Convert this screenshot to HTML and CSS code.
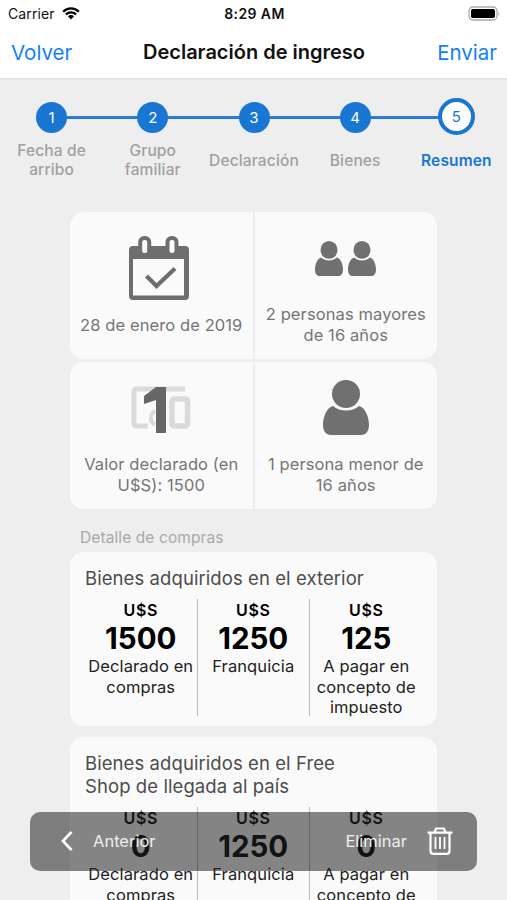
FILE: index.html
```html
<!DOCTYPE html>
<html lang="es">
<head>
    <meta charset="UTF-8">
    <meta name="viewport" content="width=device-width, initial-scale=1.0">
    <title>Declaración de ingreso</title>
    <link rel="stylesheet" href="styles.css">
</head>
<body>
    <header class="header">
        <div class="status">
            <div class="carrier">
                <span>Carrier</span>
                <svg class="wifi" width="18" height="13" viewBox="0 0 18 13">
                    <path d="M1.2 4.7a11 11 0 0 1 15.6 0M3.9 7.5a7.2 7.2 0 0 1 10.2 0" fill="none" stroke="#000" stroke-width="2.3"/>
                    <path d="M9 12.4L5.9 9.3a4.4 4.4 0 0 1 6.2 0z"/>
                </svg>
            </div>
            <span class="time">8:29 AM</span>
            <svg class="battery" width="33" height="15" viewBox="0 0 33 15">
                <rect x="1" y="1" width="28" height="13" rx="4" fill="#fff" stroke="#aaa" stroke-width="1.3"/>
                <rect x="3" y="3" width="24" height="9" rx="1.8"/>
                <path d="M30.5 5.5q1.6 2 0 4z" fill="#888"/>
            </svg>
        </div>
        <nav class="navbar">
            <a class="nav-link">Volver</a>
            <h1 class="title">Declaración de ingreso</h1>
            <a class="nav-link right">Enviar</a>
        </nav>
    </header>

    <ol class="steps">
        <li class="step"><span class="dot">1</span><span class="step-label">Fecha de<br>arribo</span></li>
        <li class="step"><span class="dot">2</span><span class="step-label">Grupo<br>familiar</span></li>
        <li class="step"><span class="dot">3</span><span class="step-label">Declaración</span></li>
        <li class="step"><span class="dot">4</span><span class="step-label">Bienes</span></li>
        <li class="step active"><span class="dot">5</span><span class="step-label">Resumen</span></li>
    </ol>

    <main class="content">
        <div class="summary">
            <div class="row">
                <div class="cell">
                    <svg class="icon-calendar" width="60" height="64" viewBox="0 0 60 64">
                        <path fill="#6e6e6e" fill-rule="evenodd" d="M4 10H56a4 4 0 0 1 4 4V60a4 4 0 0 1-4 4H4a4 4 0 0 1-4-4V14a4 4 0 0 1 4-4zM4 23V59.500H55V23z"/>
                        <rect x="11.200" y="2" width="9" height="17" rx="4" fill="#fafafa" stroke="#6e6e6e" stroke-width="4"/>
                        <rect x="38.500" y="2" width="9" height="17" rx="4" fill="#fafafa" stroke="#6e6e6e" stroke-width="4"/>
                        <path d="M17.500 40l10 10L46 32.500" fill="none" stroke="#6e6e6e" stroke-width="4.200"/>
                    </svg>
                    <p>28 de enero de 2019</p>
                </div>
                <div class="cell">
                    <div class="people">
                        <svg width="28" height="35" viewBox="0 0 46 55" preserveAspectRatio="none">
                            <circle cx="23" cy="14" r="14"/>
                            <path d="M10 26C3 28 0 38 0 45C0 51 3 55 8 55H38C43 55 46 51 46 45C46 38 43 28 36 26C29 32 17 32 10 26z"/>
                        </svg>
                        <svg width="28" height="35" viewBox="0 0 46 55" preserveAspectRatio="none">
                            <circle cx="23" cy="14" r="14"/>
                            <path d="M10 26C3 28 0 38 0 45C0 51 3 55 8 55H38C43 55 46 51 46 45C46 38 43 28 36 26C29 32 17 32 10 26z"/>
                        </svg>
                    </div>
                    <p>2 personas mayores<br>de 16 años</p>
                </div>
            </div>
            <div class="row">
                <div class="cell">
                    <svg class="icon-money" width="60" height="48" viewBox="0 0 60 48">
                        <path d="M54 3H6Q3 3 3 6V37Q3 40 6 40H17" fill="none" stroke="#dadada" stroke-width="5"/>
                        <path d="M24 25a8 8 0 0 0 0 14" fill="none" stroke="#dadada" stroke-width="4"/>
                        <rect x="41" y="13" width="15.500" height="27" rx="2" fill="none" stroke="#dadada" stroke-width="5.500"/>
                        <path d="M25 1H35V47H25V14L13 18V10z" fill="#666"/>
                    </svg>
                    <p>Valor declarado (en<br>U$S): 1500</p>
                </div>
                <div class="cell">
                    <svg class="icon-person" width="46" height="55" viewBox="0 0 46 55">
                        <circle cx="23" cy="14" r="14"/>
                        <path d="M10 26C3 28 0 38 0 45C0 51 3 55 8 55H38C43 55 46 51 46 45C46 38 43 28 36 26C29 32 17 32 10 26z"/>
                    </svg>
                    <p>1 persona menor de<br>16 años</p>
                </div>
            </div>
        </div>

        <h2 class="section-title">Detalle de compras</h2>

        <section class="card">
            <h3>Bienes adquiridos en el exterior</h3>
            <div class="amounts">
                <div class="amount"><b>U$S</b><strong>1500</strong><span>Declarado en<br>compras</span></div>
                <div class="amount"><b>U$S</b><strong>1250</strong><span>Franquicia</span></div>
                <div class="amount"><b>U$S</b><strong>125</strong><span>A pagar en<br>concepto de<br>impuesto</span></div>
            </div>
        </section>

        <section class="card">
            <h3>Bienes adquiridos en el Free<br>Shop de llegada al país</h3>
            <div class="amounts">
                <div class="amount"><b>U$S</b><strong>0</strong><span>Declarado en<br>compras</span></div>
                <div class="amount"><b>U$S</b><strong>1250</strong><span>Franquicia</span></div>
                <div class="amount"><b>U$S</b><strong>0</strong><span>A pagar en<br>concepto de<br>impuesto</span></div>
            </div>
        </section>
    </main>

    <div class="toolbar">
        <a class="tool">
            <svg width="12" height="20" viewBox="0 0 12 20"><path d="M10.500 1L2 10l8.500 9" fill="none" stroke="#fff" stroke-width="2.700"/></svg>
            <span>Anterior</span>
        </a>
        <a class="tool delete">
            <span>Eliminar</span>
            <svg width="26" height="28" viewBox="0 0 26 28" fill="none" stroke="#fff" stroke-width="2.200">
                <path d="M0.500 5.600H25.500M7.500 5.500L9 1.500H17L18.500 5.500M3.500 5.500V24Q3.500 26.800 6.500 26.800H19.500Q22.500 26.800 22.500 24V5.500"/>
                <path d="M8.500 10V22M13 10V22M17.500 10V22" stroke-width="1.800"/>
            </svg>
        </a>
    </div>
</body>
</html>
```
FILE: styles.css
```css
* {
    box-sizing: border-box;
}
body {
    margin: 0;
    height: 900px;
    overflow: hidden;
    background: #eee;
    color: #111;
    font-family: Inter, "Liberation Sans", sans-serif;
}
h1, h2, h3, p, ol {
    margin: 0;
    padding: 0;
    font-weight: 400;
}
.header {
    height: 78px;
    background: #fff;
    box-shadow: 0 1px 2px #d5d5d5;
}
.status {
    display: grid;
    grid-template-columns: 1fr auto 1fr;
    align-items: center;
    height: 27px;
    padding: 0 6px 0 8px;
    font-size: 14px;
}
.carrier {
    display: flex;
    align-items: center;
    gap: 7px;
    letter-spacing: 0.1px;
}
.time {
    font-weight: 600;
    letter-spacing: 0.4px;
}
.battery {
    justify-self: end;
}
.navbar {
    display: grid;
    grid-template-columns: 1fr auto 1fr;
    align-items: center;
    height: 50px;
    padding: 0 10px 0 11px;
}
.nav-link {
    color: #1480fa;
    font-size: 20.5px;
}
.right {
    text-align: right;
}
.title {
    font-size: 20px;
    font-weight: 600;
}

/* pasos */
.steps {
    display: grid;
    grid-template-columns: repeat(5, 101.2px);
    justify-content: center;
    height: 134px;
    padding-top: 20px;
    padding-left: 1px;
    list-style: none;
}
.step {
    position: relative;
    display: flex;
    flex-direction: column;
    align-items: center;
}
.step + .step::before {
    content: "";
    position: absolute;
    top: 18px;
    right: 50%;
    width: 100%;
    height: 2.5px;
    background: #2c7cd3;
}
.dot {
    position: relative;
    z-index: 1;
    display: flex;
    align-items: center;
    justify-content: center;
    width: 31px;
    height: 31px;
    margin: 4px 0 2px;
    border-radius: 50%;
    background: #1976d2;
    color: #fff;
    font-size: 15px;
}
.active .dot {
    width: 37px;
    height: 37px;
    margin: 0;
    border: 4px solid #1976d2;
    background: #fff;
    color: #1976d2;
}
.step-label {
    display: flex;
    align-items: center;
    height: 38px;
    margin-top: 6px;
    color: #a0a0a0;
    font-size: 15.5px;
    font-weight: 500;
    letter-spacing: 0.15px;
    line-height: 19px;
    text-align: center;
}
.active .step-label {
    color: #1976d2;
    font-weight: 600;
}

.content {
    width: 367px;
    margin-left: 70px;
}
.summary {
    display: grid;
    gap: 3px;
}
.row {
    display: grid;
    grid-template-columns: 1fr 1fr;
    gap: 2px;
    height: 147px;
    border-radius: 14px;
    overflow: hidden;
}
.cell {
    display: flex;
    flex-direction: column;
    align-items: center;
    justify-content: flex-end;
    padding-bottom: 13px;
    background: #fafafa;
    color: #757575;
    font-size: 16.5px;
    letter-spacing: 0.1px;
    line-height: 21px;
    text-align: center;
    white-space: nowrap;
    fill: #707070;
}
.row:first-child .cell:first-child {
    padding-bottom: 23px;
}
.icon-calendar {
    margin: 0 4px 15px 0;
}
.people {
    display: flex;
    gap: 5px;
    margin-bottom: 28px;
}
.icon-money {
    margin-bottom: 20px;
}
.icon-person {
    margin-bottom: 19px;
}

.section-title {
    padding: 19px 0 4px 10px;
    color: #a8a8a8;
    font-size: 15.5px;
    letter-spacing: 0.1px;
    line-height: 20px;
}
.card {
    margin-bottom: 11px;
    padding: 15px 15px 10px;
    border-radius: 14px;
    background: #fafafa;
}
.card h3 {
    margin-bottom: 9px;
    color: #4c4c4c;
    font-size: 18.5px;
    letter-spacing: 0.08px;
    line-height: 23px;
}
.amounts {
    display: grid;
    grid-template-columns: repeat(3, 112.500px);
}
.amount {
    display: flex;
    flex-direction: column;
    align-items: center;
    height: 117px;
    padding-top: 1px;
    border-right: 1.500px solid #bbb;
    color: #000;
    text-align: center;
    white-space: nowrap;
}
.amount:last-child {
    border-right: 0;
}
.amount b {
    font-size: 16px;
    font-weight: 600;
    letter-spacing: 0.7px;
    line-height: 20px;
}
.amount strong {
    font-size: 29.5px;
    font-weight: 700;
    line-height: 36px;
}
.amount span {
    color: #222;
    font-size: 16.5px;
    letter-spacing: 0.1px;
    line-height: 20.500px;
}

/* barra flotante */
.toolbar {
    position: absolute;
    z-index: 2;
    top: 812px;
    left: 30px;
    display: flex;
    justify-content: space-between;
    width: 447px;
    height: 59px;
    padding: 0 24px 0 31px;
    border-radius: 10px;
    background: rgba(34, 34, 34, 0.55);
    color: #eee;
    font-size: 16.5px;
}
.tool {
    display: flex;
    align-items: center;
    gap: 20px;
}
.tool span {
    position: relative;
    top: -1px;
}
.tool svg {
    position: relative;
    top: -1px;
}
```
